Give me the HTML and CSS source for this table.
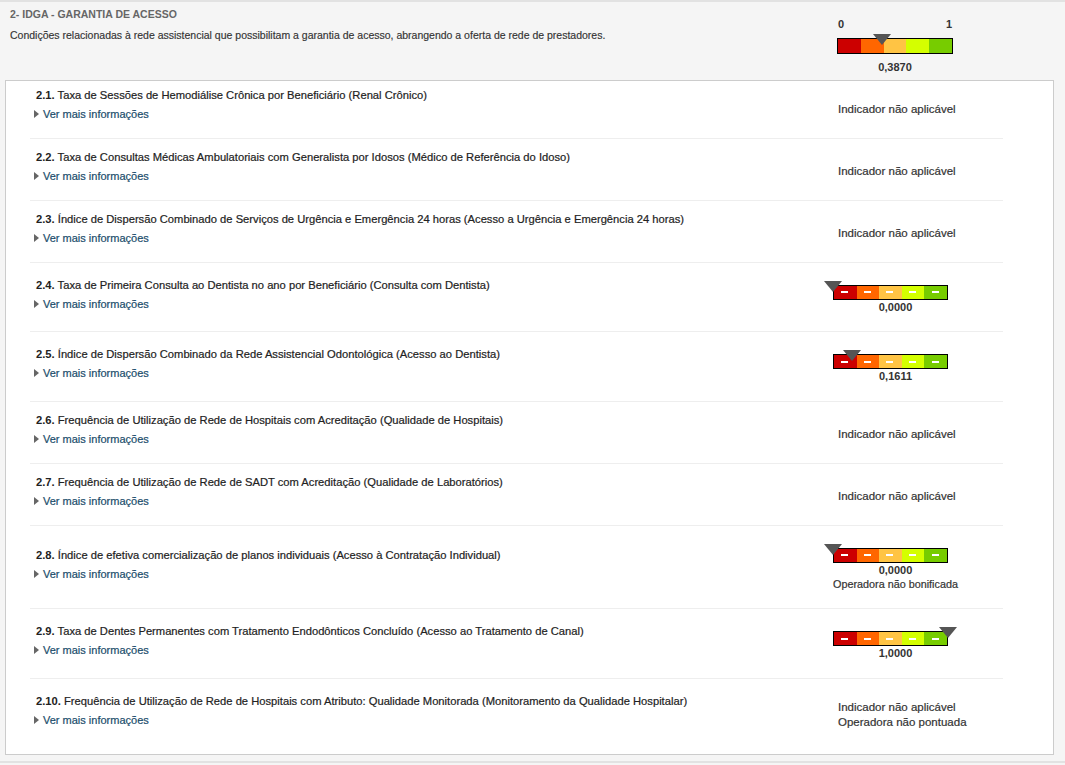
FILE: index.html
```html
<!DOCTYPE html>
<html lang="pt-BR">

<head>
  <meta charset="UTF-8">
  <title>IDGA - Garantia de Acesso</title>
  <link rel="stylesheet" href="styles.css">
</head>

<body>
  <div class="panel">
    <div class="panel-head">
      <div class="head-text">
        <h2 class="head-title">2- IDGA - GARANTIA DE ACESSO</h2>
        <p class="head-desc">Condições relacionadas à rede assistencial que possibilitam a garantia de acesso, abrangendo a oferta de rede de prestadores.</p>
      </div>
      <div class="head-gauge">
        <div class="scale"><span>0</span><span>1</span></div>
        <div class="gauge big">
          <div class="bar">
            <span class="seg s1"></span><span class="seg s2"></span><span class="seg s3"></span><span class="seg s4"></span><span class="seg s5"></span>
          </div>
          <span class="marker" style="left: 38.70%"></span>
        </div>
        <div class="value">0,3870</div>
      </div>
    </div>

    <div class="indicators">
      <div class="ind">
        <div class="ind-info">
          <div class="ind-title"><b>2.1.</b> Taxa de Sessões de Hemodiálise Crônica por Beneficiário (Renal Crônico)</div>
          <a class="more" href="#">Ver mais informações</a>
        </div>
        <div class="ind-result">
          <div class="na">Indicador não aplicável</div>
        </div>
      </div>

      <div class="ind">
        <div class="ind-info">
          <div class="ind-title"><b>2.2.</b> Taxa de Consultas Médicas Ambulatoriais com Generalista por Idosos (Médico de Referência do Idoso)</div>
          <a class="more" href="#">Ver mais informações</a>
        </div>
        <div class="ind-result">
          <div class="na">Indicador não aplicável</div>
        </div>
      </div>

      <div class="ind">
        <div class="ind-info">
          <div class="ind-title"><b>2.3.</b> Índice de Dispersão Combinado de Serviços de Urgência e Emergência 24 horas (Acesso a Urgência e Emergência 24 horas)</div>
          <a class="more" href="#">Ver mais informações</a>
        </div>
        <div class="ind-result">
          <div class="na">Indicador não aplicável</div>
        </div>
      </div>

      <div class="ind">
        <div class="ind-info">
          <div class="ind-title"><b>2.4.</b> Taxa de Primeira Consulta ao Dentista no ano por Beneficiário (Consulta com Dentista)</div>
          <a class="more" href="#">Ver mais informações</a>
        </div>
        <div class="ind-result">
          <div class="gauge-box">
            <div class="gauge">
              <div class="bar">
                <span class="seg s1"></span><span class="seg s2"></span><span class="seg s3"></span><span class="seg s4"></span><span class="seg s5"></span>
              </div>
              <span class="marker" style="left: 0%"></span>
            </div>
            <div class="value">0,0000</div>
          </div>
        </div>
      </div>

      <div class="ind">
        <div class="ind-info">
          <div class="ind-title"><b>2.5.</b> Índice de Dispersão Combinado da Rede Assistencial Odontológica (Acesso ao Dentista)</div>
          <a class="more" href="#">Ver mais informações</a>
        </div>
        <div class="ind-result">
          <div class="gauge-box">
            <div class="gauge">
              <div class="bar">
                <span class="seg s1"></span><span class="seg s2"></span><span class="seg s3"></span><span class="seg s4"></span><span class="seg s5"></span>
              </div>
              <span class="marker" style="left: 16.11%"></span>
            </div>
            <div class="value">0,1611</div>
          </div>
        </div>
      </div>

      <div class="ind">
        <div class="ind-info">
          <div class="ind-title"><b>2.6.</b> Frequência de Utilização de Rede de Hospitais com Acreditação (Qualidade de Hospitais)</div>
          <a class="more" href="#">Ver mais informações</a>
        </div>
        <div class="ind-result">
          <div class="na">Indicador não aplicável</div>
        </div>
      </div>

      <div class="ind">
        <div class="ind-info">
          <div class="ind-title"><b>2.7.</b> Frequência de Utilização de Rede de SADT com Acreditação (Qualidade de Laboratórios)</div>
          <a class="more" href="#">Ver mais informações</a>
        </div>
        <div class="ind-result">
          <div class="na">Indicador não aplicável</div>
        </div>
      </div>

      <div class="ind">
        <div class="ind-info">
          <div class="ind-title"><b>2.8.</b> Índice de efetiva comercialização de planos individuais (Acesso à Contratação Individual)</div>
          <a class="more" href="#">Ver mais informações</a>
        </div>
        <div class="ind-result">
          <div class="gauge-box">
            <div class="gauge">
              <div class="bar">
                <span class="seg s1"></span><span class="seg s2"></span><span class="seg s3"></span><span class="seg s4"></span><span class="seg s5"></span>
              </div>
              <span class="marker" style="left: 0%"></span>
            </div>
            <div class="value">0,0000</div>
            <div class="note">Operadora não bonificada</div>
          </div>
        </div>
      </div>

      <div class="ind">
        <div class="ind-info">
          <div class="ind-title"><b>2.9.</b> Taxa de Dentes Permanentes com Tratamento Endodônticos Concluído (Acesso ao Tratamento de Canal)</div>
          <a class="more" href="#">Ver mais informações</a>
        </div>
        <div class="ind-result">
          <div class="gauge-box">
            <div class="gauge">
              <div class="bar">
                <span class="seg s1"></span><span class="seg s2"></span><span class="seg s3"></span><span class="seg s4"></span><span class="seg s5"></span>
              </div>
              <span class="marker" style="left: 100%"></span>
            </div>
            <div class="value">1,0000</div>
          </div>
        </div>
      </div>

      <div class="ind">
        <div class="ind-info">
          <div class="ind-title"><b>2.10.</b> Frequência de Utilização de Rede de Hospitais com Atributo: Qualidade Monitorada (Monitoramento da Qualidade Hospitalar)</div>
          <a class="more" href="#">Ver mais informações</a>
        </div>
        <div class="ind-result">
          <div class="na">Indicador não aplicável<br>Operadora não pontuada</div>
        </div>
      </div>
    </div>
  </div>
</body>

</html>
```

FILE: styles.css
```css
html,
body {
  margin: 0;
  padding: 0;
  background: #f5f5f5;
}
body {
  font-family: "Liberation Sans", Arial, sans-serif;
  font-size: 11px;
  color: #333;
}
.panel {
  background: #f5f5f5;
  border-top: 2px solid #e2e2e2;
  border-bottom: 2px solid #e2e2e2;
  padding: 4px 0 6px 0;
}
.panel-head {
  display: flex;
  justify-content: space-between;
  align-items: flex-start;
  padding: 0 112px 0 10px;
}
.head-title {
  margin: 0;
  font-size: 10.5px;
  line-height: 16px;
  font-weight: bold;
  color: #666;
}
.head-desc {
  margin: 5px 0 0 0;
  font-size: 10.5px;
  line-height: 16px;
  color: #333;
  -webkit-text-stroke: 0.15px #333;
}
.head-gauge {
  width: 116px;
  margin-top: 11px;
}
.scale {
  display: flex;
  justify-content: space-between;
  padding: 0 1px;
  font-weight: bold;
  line-height: 14px;
  color: #333;
}
.scale + .gauge {
  margin-top: 3px;
}
.gauge {
  position: relative;
  width: 115px;
  padding-top: 4px;
}
.gauge.big {
  width: 116px;
}
.bar {
  display: flex;
  height: 13px;
  border: 1px solid #000;
}
.gauge.big .bar {
  height: 14px;
}
.seg {
  flex: 1;
  position: relative;
}
.s1 { background: #cc0000; }
.s2 { background: #ff6600; }
.s3 { background: #ffc444; }
.s4 { background: #d4ff00; }
.s5 { background: #77cc00; }
.gauge:not(.big) .seg::after {
  content: "";
  position: absolute;
  left: 50%;
  top: 50%;
  width: 7px;
  height: 2px;
  margin: -1px 0 0 -4px;
  background: #fff;
}
.marker {
  position: absolute;
  top: 0;
  width: 0;
  height: 0;
  margin-left: -9px;
  border-left: 9px solid transparent;
  border-right: 9px solid transparent;
  border-top: 11px solid #555;
}
.value {
  font-weight: bold;
  line-height: 14px;
  text-align: center;
  color: #333;
}
.head-gauge .value {
  margin-top: 6px;
}
.indicators {
  margin: 6px 11px 0 5px;
  background: #fff;
  border: 1px solid #ccc;
  padding-bottom: 6px;
}
.ind {
  display: flex;
  align-items: center;
  margin: 0 50px 0 24px;
  padding: 10.5px 45px 10.5px 6px;
  border-bottom: 1px solid #eee;
}
.ind:first-child {
  padding-top: 6px;
}
.ind:last-child {
  border-bottom: 0;
  min-height: 48px;
}
.ind-info {
  flex: 1;
  padding-bottom: 5px;
}
.ind-title {
  font-size: 11.2px;
  line-height: 16px;
  color: #222;
  -webkit-text-stroke: 0.2px #222;
}
.ind-title b {
  font-weight: bold;
  -webkit-text-stroke: 0;
}
.more {
  display: inline-flex;
  align-items: center;
  margin-top: 3px;
  line-height: 16px;
  color: #1a4d6b;
  text-decoration: none;
  -webkit-text-stroke: 0.2px #1a4d6b;
}
.more::before {
  content: "";
  width: 0;
  height: 0;
  margin: 0 4px 0 -2px;
  border-left: 5px solid #666;
  border-top: 4px solid transparent;
  border-bottom: 4px solid transparent;
}
.ind-result {
  width: 125px;
}
.na {
  padding: 4px 0 0 5px;
  font-size: 11.5px;
  line-height: 15px;
  white-space: nowrap;
  color: #333;
  -webkit-text-stroke: 0.2px #333;
}
.gauge-box {
  padding: 7.5px 0 7px 0;
}
.note {
  font-size: 10.8px;
  line-height: 14px;
  text-align: center;
  white-space: nowrap;
  color: #333;
  -webkit-text-stroke: 0.2px #333;
}
```
